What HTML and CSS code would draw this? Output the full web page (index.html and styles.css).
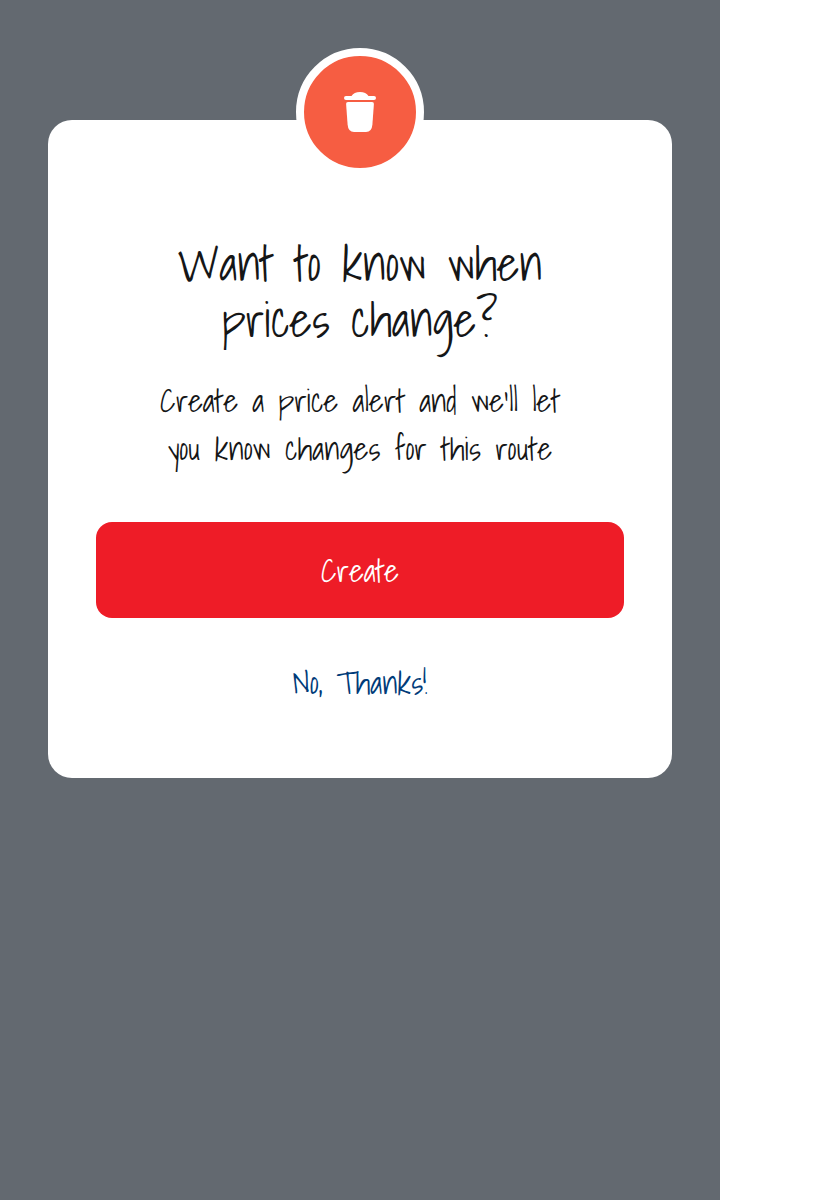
FILE: index.html
```html
<!DOCTYPE html>
<html lang="en">
<head>
<meta charset="utf-8">
<title>Price alert</title>
<link rel="stylesheet" href="styles.css">
</head>
<body>
<main class="screen">
  <section class="dialog" role="dialog" aria-labelledby="dialog-title">
    <div class="badge">
      <svg class="badge-icon" viewBox="0 0 32 40" aria-hidden="true">
        <path d="M7.5 4C9.2 1.2 12 0 16 0s6.800 1.200 8.500 4H30a2 2 0 0 1 0 4H2a2 2 0 0 1 0-4z"/>
        <path d="M4 10h24q2 0 1.900 2l-1.500 20.500Q27.800 40 22 40H10Q4.200 40 3.600 32.500L2.100 12Q2 10 4 10z"/>
      </svg>
    </div>
    <h1 class="title" id="dialog-title">Want to know when<br>prices change?</h1>
    <p class="message">Create a price alert and we'll let<br>you know changes for this route</p>
    <button class="button button-primary" type="button">Create</button>
    <button class="button button-link" type="button">No, Thanks!</button>
  </section>
</main>
</body>
</html>
```

FILE: styles.css
```css
* { box-sizing: border-box; }
body {
  margin: 0;
  background: #fff;
  color: #151617;
  font-family: "Shadows Into Light", "Open Sans", sans-serif;
  font-weight: 400;
  font-kerning: none;
}
.screen {
  width: 720px;
  height: 1200px;
  padding: 120px 48px 0;
  background: #636970;
}
.dialog {
  position: relative;
  display: flex;
  flex-direction: column;
  height: 658px;
  padding: 116px 48px 0;
  border-radius: 24px;
  background: #fff;
  text-align: center;
}
.badge {
  position: absolute;
  top: -72px;
  left: 248px;
  display: flex;
  align-items: center;
  justify-content: center;
  width: 128px;
  height: 128px;
  border: 8px solid #fff;
  border-radius: 50%;
  background: #f65d42;
}
.badge-icon { width: 32px; height: 40px; fill: #fff; }
.title {
  margin: 0;
  font-size: 48px;
  font-weight: 400;
  line-height: 56px;
  white-space: nowrap;
}
.message {
  margin: 28px 0 0;
  font-size: 32px;
  line-height: 48px;
  white-space: nowrap;
}
.button {
  height: 96px;
  padding: 0;
  border: 0;
  border-radius: 16px;
  font: inherit;
  font-size: 32px;
  line-height: 48px;
  font-kerning: none;
}
.button-primary { margin-top: 50px; background: #ee1c27; color: #fff; }
.button-link { margin-top: 16px; background: none; color: #003b79; }
```
